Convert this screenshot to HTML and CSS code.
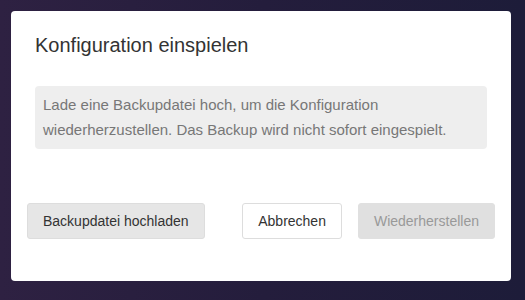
FILE: index.html
```html
<!DOCTYPE html>
<html lang="de">
<head>
  <meta charset="UTF-8">
  <meta name="viewport" content="width=device-width, initial-scale=1.0">
  <title>Konfiguration einspielen</title>
  <link rel="stylesheet" href="styles.css">
</head>
<body>
  <div class="dialog">
    <div class="dialog-header">
      <h2>Konfiguration einspielen</h2>
    </div>
    <div class="dialog-body">
      <p class="info">Lade eine Backupdatei hoch, um die Konfiguration wiederherzustellen. Das Backup wird nicht sofort eingespielt.</p>
    </div>
    <div class="dialog-footer">
      <button class="btn btn-upload">Backupdatei hochladen</button>
      <div class="actions">
        <button class="btn btn-cancel">Abbrechen</button>
        <button class="btn btn-restore" disabled>Wiederherstellen</button>
      </div>
    </div>
  </div>
</body>
</html>
```

FILE: styles.css
```css
html, body {
  height: 100%;
}
body {
  margin: 0;
  padding: 11px 14px 19px 11px;
  box-sizing: border-box;
  font-family: "Liberation Sans", Arial, sans-serif;
  background: linear-gradient(90deg, #2e2142 0%, #241d3c 50%, #1d1c39 100%);
}
.dialog {
  background-color: #fff;
  border-radius: 4px;
  height: 270px;
  display: flex;
  flex-direction: column;
}
.dialog-header {
  padding: 22px 24px 0;
}
.dialog-header h2 {
  margin: 0;
  font-size: 20px;
  font-weight: normal;
  line-height: 24px;
  color: #333;
}
.dialog-body {
  padding: 29px 24px 0;
}
.info {
  margin: 0;
  padding: 6px 8px 7px;
  background-color: #eee;
  border-radius: 4px;
  font-size: 15px;
  line-height: 25px;
  color: #777;
}
.dialog-footer {
  display: flex;
  justify-content: space-between;
  align-items: center;
  padding: 54px 16px 0;
}
.actions {
  display: flex;
  gap: 16px;
}
.btn {
  font-family: inherit;
  font-size: 14px;
  height: 36px;
  padding: 0 15px;
  border: 1px solid #ddd;
  border-radius: 3px;
  color: #333;
  cursor: pointer;
}
.btn-upload {
  background-color: #e6e6e6;
}
.btn-cancel {
  background-color: #fff;
}
.btn-restore {
  background-color: #e0e0e0;
  border-color: #e0e0e0;
  color: #999;
  cursor: default;
}
```
